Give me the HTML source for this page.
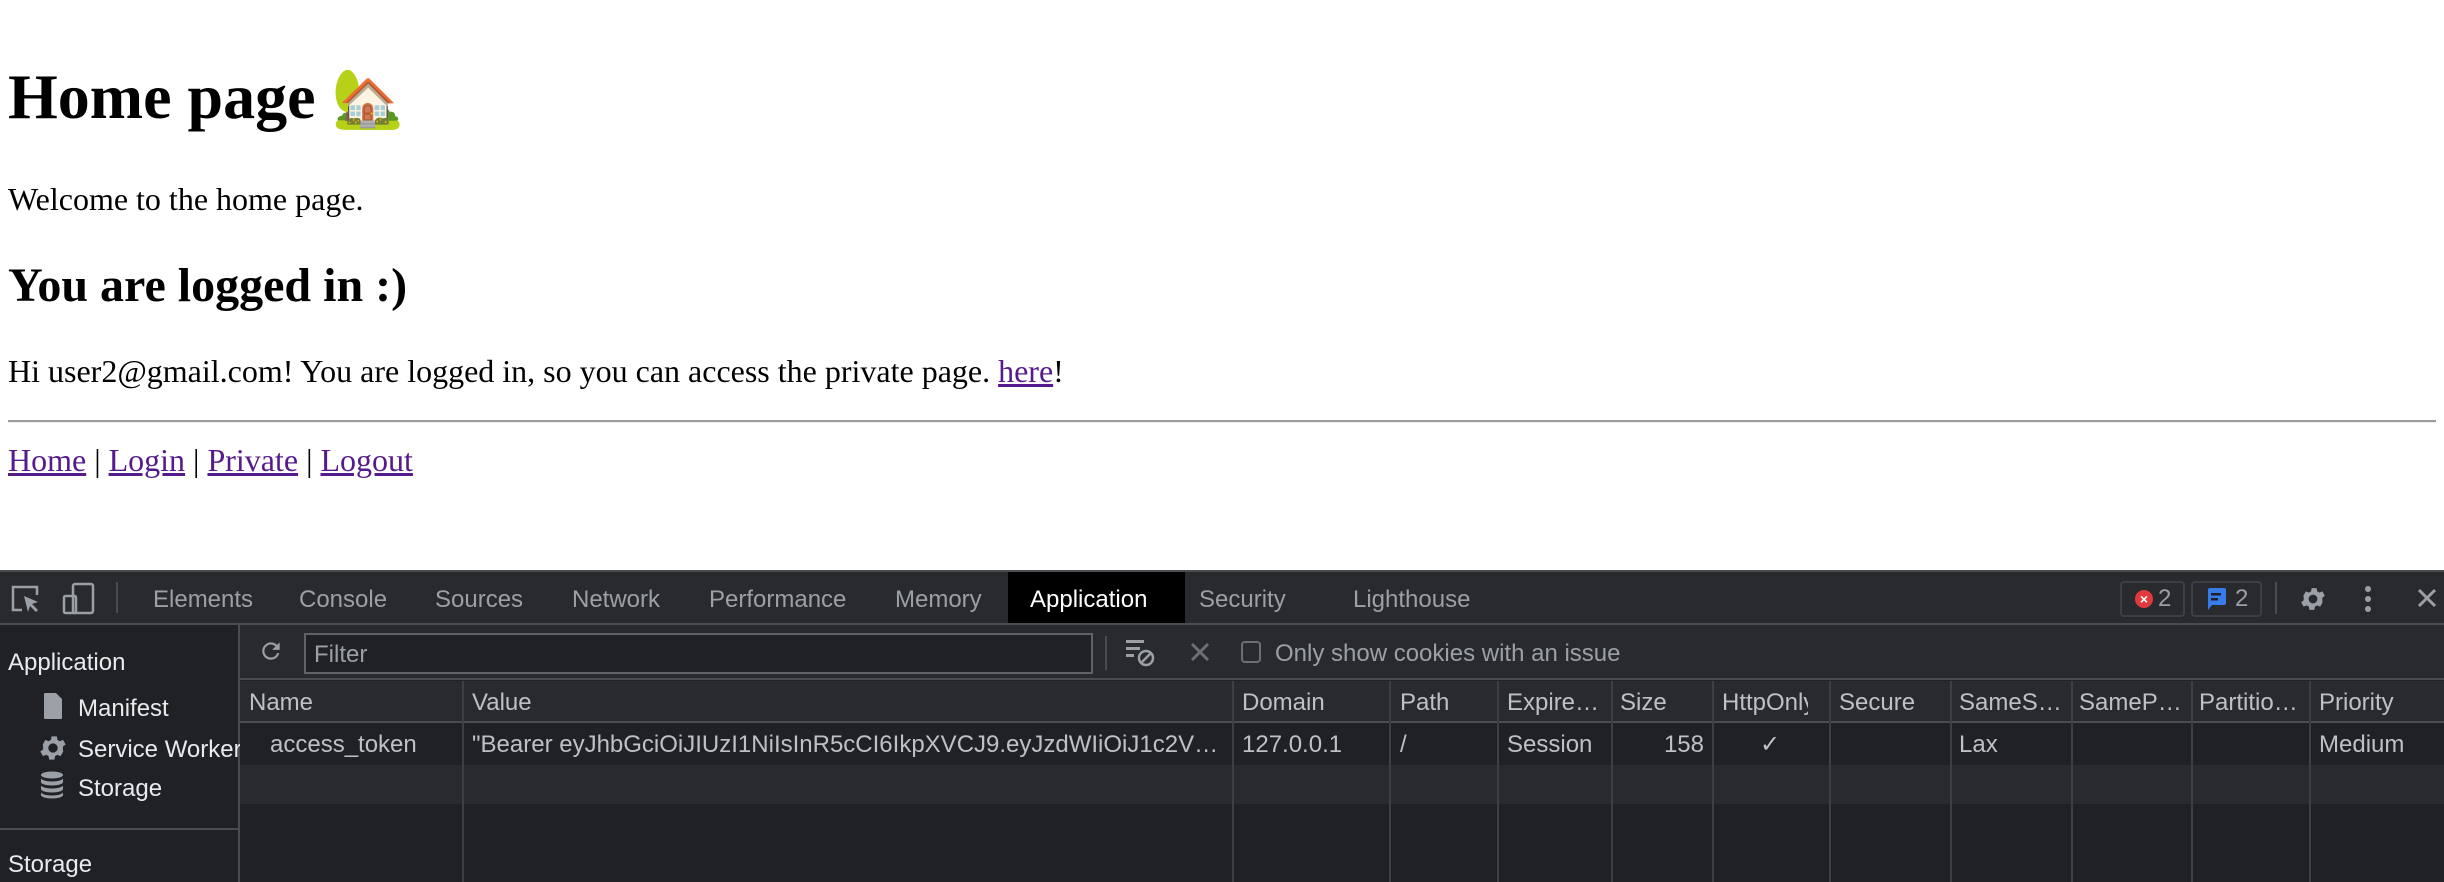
<!DOCTYPE html>
<html><head><meta charset="utf-8"><style>
*{margin:0;padding:0;box-sizing:border-box}
body{width:2444px;height:882px;overflow:hidden;background:#fff;position:relative;font-family:"Liberation Serif",serif;color:#000}
.a{position:absolute;white-space:nowrap;line-height:1}
a{color:#551a8b;text-decoration:underline}
.dt{position:absolute;left:0;top:570px;width:2444px;height:312px;background:#202124;font-family:"Liberation Sans",sans-serif;color:#bdc1c6}
.dt .a{font-size:24px}
.tab{color:#9aa0a6;top:18px}
.hd{color:#bdc1c6}
.vl{position:absolute;width:2px;background:#3d3f43}
</style></head><body>
<div class="a" style="left:8px;top:65px;font-size:64px;font-weight:bold">Home page <span style="font-family:'Noto Color Emoji',sans-serif;font-size:58px">🏡</span></div>
<div class="a" style="left:8px;top:183px;font-size:32px">Welcome to the home page.</div>
<div class="a" style="left:8px;top:262px;font-size:48px;font-weight:bold">You are logged in :)</div>
<div class="a" style="left:8px;top:355px;font-size:32px">Hi user2@gmail.com! You are logged in, so you can access the private page. <a>here</a>!</div>
<div style="position:absolute;left:8px;top:420px;width:2428px;height:3px;border-top:2px solid #9a9a9a;border-bottom:1px solid #eee"></div>
<div class="a" style="left:8px;top:444px;font-size:32px"><a>Home</a> | <a>Login</a> | <a>Private</a> | <a>Logout</a></div>

<div class="dt">
 <div style="position:absolute;left:0;top:0;width:2444px;height:55px;background:#292a2d;border-top:2px solid #494c50;border-bottom:2px solid #494c50"></div>
 <svg style="position:absolute;left:10px;top:14px" width="32" height="32" viewBox="0 0 32 32" fill="none" stroke="#9aa0a6" stroke-width="2.5"><path d="M12 26H3V3h24v8"/><path d="M14 12l14 6-6 2 6 6-2 2-6-6-2 6z" fill="#9aa0a6" stroke="none"/></svg>
 <svg style="position:absolute;left:62px;top:12px" width="34" height="34" viewBox="0 0 34 34" fill="none" stroke="#9aa0a6" stroke-width="2.5"><rect x="11" y="2" width="20" height="29" rx="2"/><rect x="2" y="14" width="12" height="17" rx="1.5"/></svg>
 <div style="position:absolute;left:116px;top:12px;width:2px;height:31px;background:#494c50"></div>
 <div class="a tab" style="left:153px">Elements</div>
 <div class="a tab" style="left:299px">Console</div>
 <div class="a tab" style="left:435px">Sources</div>
 <div class="a tab" style="left:572px">Network</div>
 <div class="a tab" style="left:709px">Performance</div>
 <div class="a tab" style="left:895px">Memory</div>
 <div style="position:absolute;left:1008px;top:2px;width:177px;height:51px;background:#000"></div>
 <div class="a tab" style="left:1030px;color:#fff">Application</div>
 <div class="a tab" style="left:1199px">Security</div>
 <div class="a tab" style="left:1353px">Lighthouse</div>
 <div style="position:absolute;left:2120px;top:11px;width:65px;height:36px;border:2px solid #3c4043;border-radius:4px"></div>
 <div style="position:absolute;left:2135px;top:20px;width:18px;height:18px;border-radius:50%;background:#e0393e;color:#fff;font-size:14px;line-height:18px;text-align:center;font-weight:bold">×</div>
 <div class="a" style="left:2158px;top:17px;color:#9aa0a6">2</div>
 <div style="position:absolute;left:2191px;top:11px;width:71px;height:36px;border:2px solid #3c4043;border-radius:4px"></div>
 <svg style="position:absolute;left:2205px;top:17px" width="22" height="24" viewBox="0 0 22 24"><path d="M3 1h16a2 2 0 0 1 2 2v13a2 2 0 0 1-2 2H7l-4 5V3a2 2 0 0 1 2-2z" fill="#3a7bec"/><rect x="6" y="6" width="10" height="2.5" fill="#202124"/><rect x="6" y="11" width="7" height="2.5" fill="#202124"/></svg>
 <div class="a" style="left:2235px;top:17px;color:#9aa0a6">2</div>
 <div style="position:absolute;left:2275px;top:12px;width:2px;height:32px;background:#494c50"></div>
 <svg style="position:absolute;left:2298px;top:14px" width="30" height="30" viewBox="0 0 24 24"><path fill="#9aa0a6" d="M19.4 13a7.5 7.5 0 0 0 0-2l2.1-1.6-2-3.5-2.5 1a7.3 7.3 0 0 0-1.7-1l-.4-2.6h-4l-.4 2.6a7.3 7.3 0 0 0-1.7 1l-2.5-1-2 3.5L4.600 11a7.5 7.5 0 0 0 0 2l-2.1 1.6 2 3.5 2.5-1a7.3 7.3 0 0 0 1.7 1l.4 2.6h4l.4-2.6a7.3 7.3 0 0 0 1.7-1l2.5 1 2-3.5zM12 15.5A3.5 3.5 0 1 1 12 8.5a3.5 3.5 0 0 1 0 7z"/></svg>
 <div style="position:absolute;left:2365px;top:16px;width:6px;height:6px;border-radius:50%;background:#9aa0a6;box-shadow:0 10px 0 #9aa0a6,0 20px 0 #9aa0a6"></div>
 <svg style="position:absolute;left:2417px;top:18px" width="20" height="20" viewBox="0 0 20 20" stroke="#9aa0a6" stroke-width="3"><path d="M2 2l16 16M18 2L2 18"/></svg>

 <div style="position:absolute;left:238px;top:55px;width:2px;height:257px;background:#494c50"></div>
 <div class="a" style="left:8px;top:81px;color:#e8eaed">Application</div>
 <svg style="position:absolute;left:42px;top:122px" width="22" height="28" viewBox="0 0 20 28"><path d="M2 1h11l6 6v19a1 1 0 0 1-1 1H2a1 1 0 0 1-1-1V2a1 1 0 0 1 1-1z" fill="#9aa0a6"/></svg>
 <div class="a" style="left:78px;top:127px;color:#e8eaed">Manifest</div>
 <svg style="position:absolute;left:37px;top:162px" width="32" height="32" viewBox="0 0 24 24"><path fill="#9aa0a6" d="M19.4 13a7.5 7.5 0 0 0 0-2l2.1-1.6-2-3.5-2.5 1a7.3 7.3 0 0 0-1.7-1l-.4-2.6h-4l-.4 2.6a7.3 7.3 0 0 0-1.7 1l-2.5-1-2 3.5L4.600 11a7.5 7.5 0 0 0 0 2l-2.1 1.6 2 3.5 2.5-1a7.3 7.3 0 0 0 1.7 1l.4 2.6h4l.4-2.6a7.3 7.3 0 0 0 1.700-1l2.5 1 2-3.5zM12 15.5A3.5 3.5 0 1 1 12 8.5a3.5 3.5 0 0 1 0 7z"/></svg>
 <div class="a" style="left:78px;top:168px;color:#e8eaed">Service Worker</div>
 <svg style="position:absolute;left:40px;top:201px" width="24" height="28" viewBox="0 0 24 28" fill="#9aa0a6"><ellipse cx="12" cy="4" rx="11" ry="3.5"/><path d="M1 7c0 2 5 3.5 11 3.5S23 9 23 7v4c0 2-5 3.5-11 3.5S1 13 1 11zM1 14c0 2 5 3.5 11 3.5S23 16 23 14v4c0 2-5 3.5-11 3.5S1 20 1 18zM1 21c0 2 5 3.5 11 3.5S23 23 23 21v3c0 2-5 3.5-11 3.5S1 26 1 24z"/></svg>
 <div class="a" style="left:78px;top:207px;color:#e8eaed">Storage</div>
 <div style="position:absolute;left:0;top:258px;width:238px;height:2px;background:#494c50"></div>
 <div class="a" style="left:8px;top:283px;color:#e8eaed">Storage</div>

 <div style="position:absolute;left:240px;top:55px;width:2204px;height:55px;background:#292a2d;border-bottom:2px solid #494c50"></div>
 <svg style="position:absolute;left:258px;top:68px" width="26" height="26" viewBox="0 0 24 24"><path d="M17.6 6.4A8 8 0 1 0 19.7 14h-2.1a6 6 0 1 1-1.4-6.2L13 11h7V4z" fill="#9aa0a6"/></svg>
 <div style="position:absolute;left:304px;top:63px;width:789px;height:41px;background:#202124;border:2px solid #5f6368"></div>
 <div class="a" style="left:314px;top:73px;color:#9aa0a6">Filter</div>
 <div style="position:absolute;left:1105px;top:66px;width:2px;height:34px;background:#494c50"></div>
 <svg style="position:absolute;left:1126px;top:68px" width="34" height="30" viewBox="0 0 34 30" fill="#9aa0a6"><rect x="0" y="2" width="18" height="3"/><rect x="0" y="9" width="14" height="3"/><rect x="0" y="16" width="8" height="3"/><circle cx="20" cy="20" r="7" fill="none" stroke="#9aa0a6" stroke-width="2.5"/><path d="M15 25l10-10" stroke="#9aa0a6" stroke-width="2.5"/></svg>
 <svg style="position:absolute;left:1190px;top:72px" width="20" height="20" viewBox="0 0 20 20" stroke="#6b6f74" stroke-width="3"><path d="M2 2l16 16M18 2L2 18"/></svg>
 <div style="position:absolute;left:1241px;top:71px;width:20px;height:22px;border:2px solid #6b6f74;border-radius:4px"></div>
 <div class="a" style="left:1275px;top:72px;color:#9aa0a6">Only show cookies with an issue</div>

 <div style="position:absolute;left:240px;top:111px;width:2204px;height:42px;background:#292a2d;border-bottom:2px solid #494c50"></div>
 <div style="position:absolute;left:240px;top:153px;width:2204px;height:42px;background:#202124"></div>
 <div style="position:absolute;left:240px;top:195px;width:2204px;height:39px;background:#292a2d"></div>
 <div class="vl" style="left:462px;top:111px;height:201px"></div>
 <div class="vl" style="left:1232px;top:111px;height:201px"></div>
 <div class="vl" style="left:1389px;top:111px;height:201px"></div>
 <div class="vl" style="left:1497px;top:111px;height:201px"></div>
 <div class="vl" style="left:1611px;top:111px;height:201px"></div>
 <div class="vl" style="left:1712px;top:111px;height:201px"></div>
 <div class="vl" style="left:1829px;top:111px;height:201px"></div>
 <div class="vl" style="left:1950px;top:111px;height:201px"></div>
 <div class="vl" style="left:2071px;top:111px;height:201px"></div>
 <div class="vl" style="left:2191px;top:111px;height:201px"></div>
 <div class="vl" style="left:2309px;top:111px;height:201px"></div>
 <div class="a hd" style="left:249px;top:121px">Name</div>
 <div class="a hd" style="left:472px;top:121px">Value</div>
 <div class="a hd" style="left:1242px;top:121px">Domain</div>
 <div class="a hd" style="left:1400px;top:121px">Path</div>
 <div class="a hd" style="left:1507px;top:121px">Expire…</div>
 <div class="a hd" style="left:1620px;top:121px">Size</div>
 <div class="a hd" style="left:1722px;top:121px;width:86px;overflow:hidden">HttpOnly</div>
 <div class="a hd" style="left:1839px;top:121px">Secure</div>
 <div class="a hd" style="left:1959px;top:121px">SameS…</div>
 <div class="a hd" style="left:2079px;top:121px">SameP…</div>
 <div class="a hd" style="left:2199px;top:121px">Partitio…</div>
 <div class="a hd" style="left:2319px;top:121px">Priority</div>
 <div class="a hd" style="left:270px;top:163px">access_token</div>
 <div class="a hd" style="left:472px;top:163px;width:752px;overflow:hidden">"Bearer eyJhbGciOiJIUzI1NiIsInR5cCI6IkpXVCJ9.eyJzdWIiOiJ1c2V…</div>
 <div class="a hd" style="left:1242px;top:163px">127.0.0.1</div>
 <div class="a hd" style="left:1400px;top:163px">/</div>
 <div class="a hd" style="left:1507px;top:163px">Session</div>
 <div class="a hd" style="left:1650px;top:163px;width:54px;text-align:right">158</div>
 <div class="a hd" style="left:1760px;top:163px">✓</div>
 <div class="a hd" style="left:1959px;top:163px">Lax</div>
 <div class="a hd" style="left:2319px;top:163px">Medium</div>
</div>
</body></html>
